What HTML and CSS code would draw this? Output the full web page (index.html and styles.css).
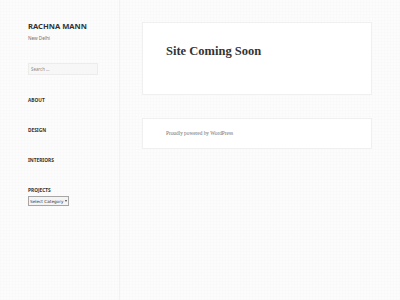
FILE: index.html
```html
<!DOCTYPE html>
<html>
<head>
<meta charset="utf-8">
<link rel="stylesheet" href="styles.css">
</head>
<body>
<div class="page">
  <aside class="sidebar">
    <h1 class="site-title">RACHNA MANN</h1>
    <p class="site-desc">New Delhi</p>
    <div class="search"><span class="placeholder">Search …</span></div>
    <nav class="widgets">
      <h2 class="widget-title">About</h2>
      <h2 class="widget-title">Design</h2>
      <h2 class="widget-title">Interiors</h2>
      <h2 class="widget-title">Projects</h2>
    </nav>
    <div class="select"><span>Select Category</span><span class="arrow"></span></div>
  </aside>
  <main class="content">
    <article class="card entry">
      <h2 class="entry-title">Site Coming Soon</h2>
    </article>
    <footer class="card footer">
      <span class="powered">Proudly powered by WordPress</span>
    </footer>
  </main>
</div>
</body>
</html>
```
FILE: styles.css
```css
html, body {
  margin: 0;
  padding: 0;
  height: 100%;
}
body {
  background-color: #fcfcfc;
  background-image:
    repeating-linear-gradient(0deg, rgba(0,0,0,0.006) 0 1px, transparent 1px 3px),
    repeating-linear-gradient(90deg, rgba(0,0,0,0.006) 0 1px, transparent 1px 3px);
  font-family: "Noto Sans", sans-serif;
  font-size: 5px;
  color: #333;
}
.page {
  display: flex;
  height: 300px;
}
.sidebar {
  width: 91px;
  padding: 21px 0 0 28px;
  border-right: 1px solid #f2f2f2;
  box-sizing: content-box;
}
.site-title {
  margin: 0;
  font-size: 7.6px;
  line-height: 10px;
  font-weight: 700;
  color: #333;
}
.site-desc {
  margin: 4px 0 0;
  font-size: 4.6px;
  line-height: 7px;
  color: #707070;
}
.search {
  margin-top: 21px;
  width: 66px;
  height: 10px;
  border: 1px solid #ececec;
  background: #f7f7f7;
  display: flex;
  align-items: center;
  padding-left: 2px;
  box-sizing: content-box;
}
.placeholder {
  font-size: 4.4px;
  color: #8a8a8a;
}
.widgets {
  margin-top: 22px;
  display: flex;
  flex-direction: column;
  gap: 23px;
}
.widget-title {
  margin: 0;
  font-size: 4.8px;
  line-height: 7px;
  font-weight: 700;
  text-transform: uppercase;
  color: #333;
}
.select {
  margin-top: 2px;
  width: 37px;
  height: 8px;
  border: 1px solid #a6a6a6;
  background: #f4f4f4;
  display: flex;
  align-items: center;
  justify-content: space-between;
  padding: 0 1px;
  font-family: "DejaVu Sans", sans-serif;
  font-size: 4.2px;
  white-space: nowrap;
  color: #333;
  box-sizing: content-box;
}
.arrow {
  width: 0;
  height: 0;
  border-left: 1.5px solid transparent;
  border-right: 1.5px solid transparent;
  border-top: 2px solid #444;
}
.content {
  padding: 22px 0 0 22px;
  display: flex;
  flex-direction: column;
  gap: 23px;
}
.card {
  width: 230px;
  background: #fff;
  border: 1px solid #f0f0f0;
  box-sizing: border-box;
}
.entry {
  height: 73px;
  padding: 21px 0 0 23px;
}
.entry-title {
  margin: 0;
  font-family: "Liberation Serif", serif;
  font-size: 12.5px;
  line-height: 15px;
  font-weight: 700;
  color: #333;
}
.footer {
  height: 31px;
  padding: 11px 0 0 23px;
  font-size: 5.3px;
  line-height: 7px;
}
.powered {
  font-family: "Liberation Serif", serif;
  font-size: 5.3px;
  color: #707070;
}
```
